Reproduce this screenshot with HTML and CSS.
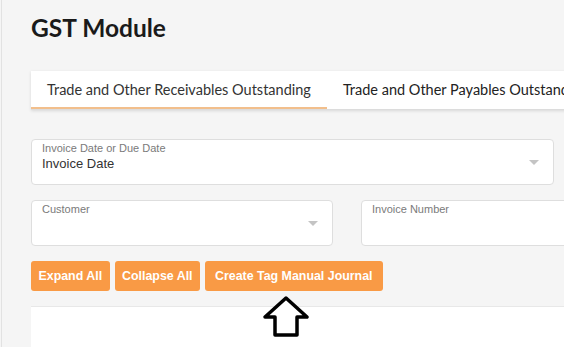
FILE: index.html
```html
<!DOCTYPE html>
<html>
<head>
<meta charset="utf-8">
<link rel="stylesheet" href="styles.css">
</head>
<body>
<div class="page">
  <h1 class="title">GST Module</h1>
  <div class="tabs">
    <div class="tab active">Trade and Other Receivables Outstanding</div>
    <div class="tab">Trade and Other Payables Outstanding</div>
  </div>
  <div class="field wide">
    <div class="label">Invoice Date or Due Date</div>
    <div class="value">Invoice Date</div>
    <span class="caret"></span>
  </div>
  <div class="row">
    <div class="field half">
      <div class="label">Customer</div>
      <div class="value"></div>
      <span class="caret"></span>
    </div>
    <div class="field half">
      <div class="label">Invoice Number</div>
      <div class="value"></div>
    </div>
  </div>
  <div class="buttons">
    <button class="btn">Expand All</button>
    <button class="btn">Collapse All</button>
    <button class="btn">Create Tag Manual Journal</button>
  </div>
  <div class="panel"></div>
  <svg class="arrow" width="48" height="42" viewBox="0 0 48 42">
    <path d="M24 2 L45 21 L35 21 L35 39 L13 39 L13 21 L3 21 Z" fill="#fff" stroke="#000" stroke-width="3.5" stroke-linejoin="round"/>
  </svg>
</div>
</body>
</html>
```
FILE: styles.css
```css
html, body {
  margin: 0;
  padding: 0;
  height: 100%;
  overflow: hidden;
  background: #f5f5f5;
}
.page {
  position: relative;
  margin-left: 1px;
  border-left: 1px solid #e2e2e2;
  padding-left: 29px;
  height: 100%;
  box-sizing: border-box;
  width: 900px;
}
.title {
  margin: 0;
  padding-top: 13px;
  height: 71px;
  box-sizing: border-box;
  font-family: "Lato", "Open Sans", sans-serif;
  font-weight: 700;
  font-size: 24.5px;
  line-height: 30px;
  color: #1a1a1a;
}
.tabs {
  display: flex;
  background: #fff;
  height: 39px;
  box-shadow: 0 1px 3px rgba(0,0,0,0.12);
  border-bottom: 1px solid #dcdcdc;
  box-sizing: border-box;
}
.tab {
  padding: 0 16px;
  font-family: "Lato", "Open Sans", sans-serif;
  font-size: 14.5px;
  color: #222;
  line-height: 37px;
  white-space: nowrap;
}
.tab.active {
  color: #333;
  border-bottom: 2px solid #f2bf8c;
}
.field {
  position: relative;
  background: #fff;
  border: 1px solid #dedede;
  border-radius: 4px;
  height: 46px;
  box-sizing: border-box;
  padding: 2px 10px 0;
  font-family: "Liberation Sans", Arial, sans-serif;
}
.field.wide {
  width: 523px;
  margin-top: 29px;
}
.row {
  display: flex;
  gap: 28px;
  margin-top: 15px;
}
.field.half {
  width: 302px;
  flex: none;
}
.label {
  font-size: 11px;
  line-height: 13px;
  color: #7a7a7a;
}
.value {
  font-size: 13px;
  line-height: 18px;
  color: #333;
}
.caret {
  position: absolute;
  right: 14px;
  top: 20px;
  width: 0;
  height: 0;
  border-left: 5px solid transparent;
  border-right: 5px solid transparent;
  border-top: 5px solid #c4c4c4;
}
.buttons {
  display: flex;
  gap: 5px;
  margin-top: 15px;
}
.btn {
  background: #f99a45;
  color: #fff;
  border: none;
  border-radius: 3px;
  height: 30px;
  padding: 0 7.5px;
  font-family: "Liberation Sans", Arial, sans-serif;
  font-size: 12.4px;
  font-weight: 600;
  cursor: pointer;
}
.btn:last-child {
  padding: 0 10px;
}
.panel {
  margin-top: 15px;
  background: #fff;
  border-top: 1px solid #e8e8e8;
  height: 60px;
}
.arrow {
  position: absolute;
  left: 260px;
  top: 296px;
}
```
